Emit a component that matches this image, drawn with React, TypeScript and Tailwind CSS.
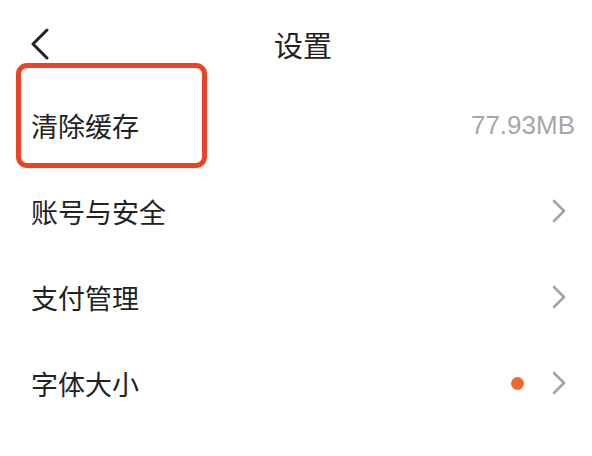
import React from "react";

const Chevron = () => (
  <svg width="14" height="24" viewBox="0 0 14 24" fill="none" className="shrink-0">
    <polyline points="2,2 12,12 2,22" stroke="#a3a3a3" strokeWidth="2.6" strokeLinecap="round" strokeLinejoin="round" />
  </svg>
);

const rows = [
  { label: "账号与安全", dot: false },
  { label: "支付管理", dot: false },
  { label: "字体大小", dot: true },
];

export default function App() {
  return (
    <div className="relative w-[592px] h-[456px] bg-white text-[#222222] font-['Noto_Sans_CJK_SC','Noto_Sans',sans-serif]">
      <header className="h-[82px] pt-[6px] grid grid-cols-[1fr_auto_1fr] items-center">
        <div className="pl-[30px] flex items-center">
          <svg width="20" height="32" viewBox="0 0 20 32" fill="none">
            <polyline points="17,2 3,16 17,30" stroke="#222222" strokeWidth="3" strokeLinecap="round" strokeLinejoin="round" />
          </svg>
        </div>
        <h1 className="text-[29px] leading-none font-normal pl-[14px]">设置</h1>
        <div />
      </header>

      <div className="h-[86px] flex items-center justify-between pl-[31px] pr-[17px]">
        <span className="text-[27px] leading-none">清除缓存</span>
        <span className="text-[26px] leading-none text-[#a6a6a6] font-['Liberation_Sans',sans-serif]">77.93MB</span>
      </div>

      {rows.map((r) => (
        <div key={r.label} className="h-[86px] flex items-center justify-between pl-[31px] pr-[26px]">
          <span className="text-[27px] leading-none">{r.label}</span>
          <div className="flex items-center gap-[28px]">
            {r.dot && <span className="w-[13px] h-[13px] rounded-full bg-[#ee6a2e]" />}
            <Chevron />
          </div>
        </div>
      ))}

      <div className="absolute left-[16px] top-[63px] w-[191px] h-[105px] border-[5px] border-[#ea4328] rounded-[11px] pointer-events-none" />
    </div>
  );
}
